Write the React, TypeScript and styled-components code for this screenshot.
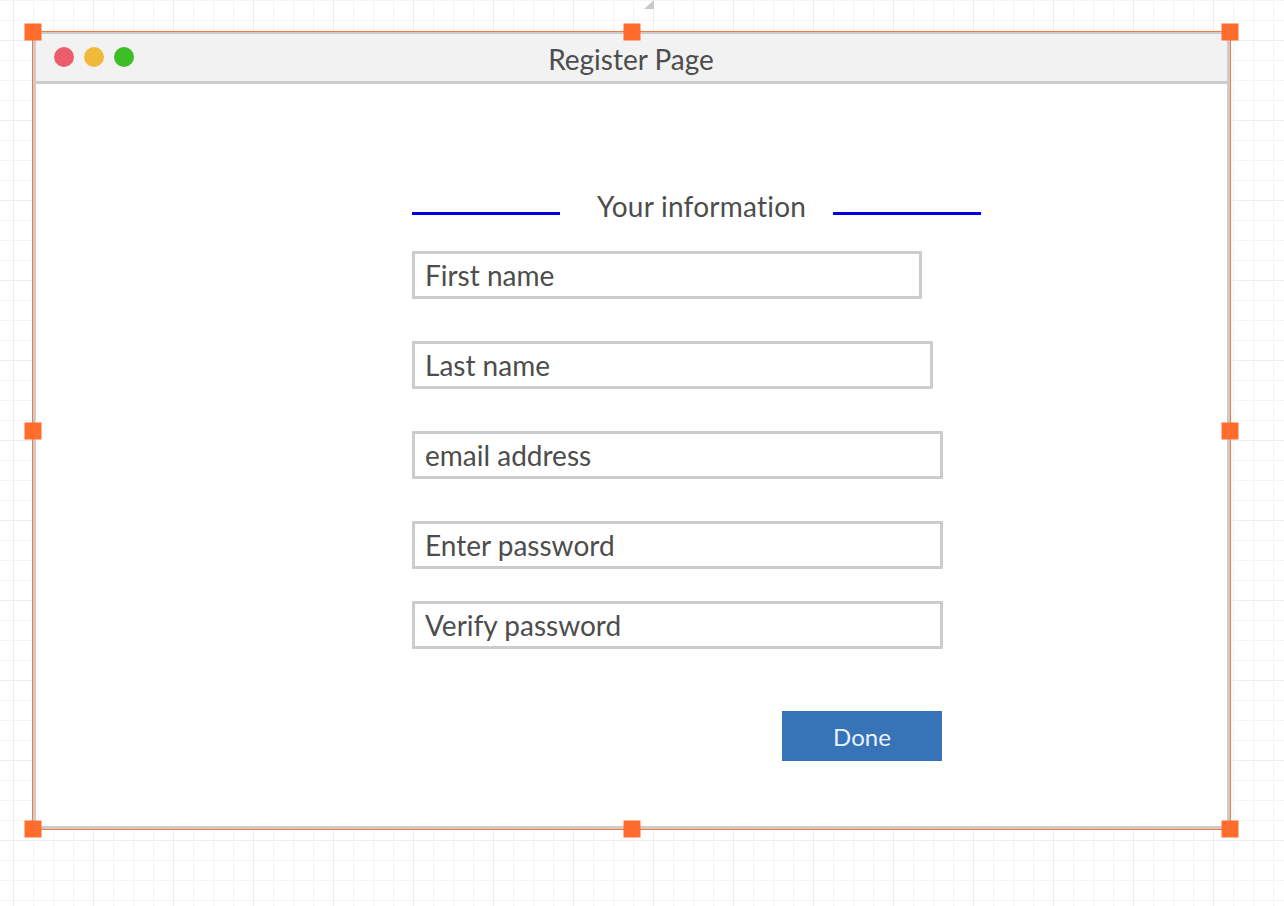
import React from "react";
import styled, { createGlobalStyle } from "styled-components";

const Global = createGlobalStyle`
  html, body { margin: 0; padding: 0; }
  body {
    width: 1284px;
    height: 906px;
    overflow: hidden;
    font-family: Lato, "Open Sans", sans-serif;
    background-color: #ffffff;
    background-image:
      linear-gradient(to right, #eeeeee 1px, transparent 1px),
      linear-gradient(to bottom, #eeeeee 1px, transparent 1px),
      linear-gradient(to right, #f4f4f4 1px, transparent 1px),
      linear-gradient(to bottom, #f4f4f4 1px, transparent 1px);
    background-size: 80px 80px, 80px 80px, 20px 20px, 20px 20px;
    background-position: 13px 40px, 13px 40px, 13px 0px, 13px 0px;
  }
`;

const Canvas = styled.div`
  position: relative;
  width: 1284px;
  height: 906px;
  padding: 31px 0 0 32px;
  box-sizing: border-box;
`;

const RotateMark = styled.div`
  position: absolute;
  left: 644px;
  top: 0;
  width: 0;
  height: 0;
  border-left: 10px solid transparent;
  border-bottom: 9px solid #c9c9c9;
`;

const Selection = styled.div`
  position: relative;
  width: 1199px;
  height: 799px;
  box-sizing: border-box;
  border: 1px solid #f47a42;
`;

const Window = styled.div`
  width: 100%;
  height: 100%;
  box-sizing: border-box;
  border: 3px solid #cccccc;
  border-top-width: 2px;
  background: #ffffff;
  display: flex;
  flex-direction: column;
`;

const TitleBar = styled.div`
  position: relative;
  height: 47px;
  flex: none;
  background: #f2f2f2;
  border-bottom: 3px solid #cccccc;
  display: flex;
  align-items: center;
  justify-content: center;
`;

const Lights = styled.div`
  position: absolute;
  left: 18px;
  top: 13px;
  display: flex;
  gap: 10px;
`;

const Light = styled.span<{ $c: string }>`
  width: 20px;
  height: 20px;
  border-radius: 50%;
  background: ${(p) => p.$c};
`;

const Title = styled.div`
  font-size: 28px;
  color: #4d4d4d;
  margin-left: -1px;
  margin-top: 2px;
`;

const Body = styled.div`
  flex: 1;
  padding: 102px 0 0 376px;
  display: flex;
  flex-direction: column;
`;

const Form = styled.div`
  width: 580px;
  display: flex;
  flex-direction: column;
`;

const Heading = styled.div`
  display: flex;
  align-items: center;
  height: 40px;
`;

const Rule = styled.div<{ $gap: number }>`
  width: 148px;
  height: 3px;
  background: #0000e0;
  margin-top: 15px;
  margin-left: ${(p) => p.$gap}px;
  flex: none;
`;

const HeadingText = styled.div`
  font-size: 28px;
  color: #4d4d4d;
  margin-left: 37px;
  letter-spacing: 0.25px;
  white-space: nowrap;
`;

const Spacer = styled.div`
  height: 25px;
`;

const Field = styled.input<{ $w: number; $mt: number }>`
  display: block;
  box-sizing: border-box;
  width: ${(p) => p.$w}px;
  height: 48px;
  margin: ${(p) => p.$mt}px 0 0 0;
  padding: 0 0 0 10px;
  border: 3px solid #cccccc;
  border-radius: 1px;
  background: #ffffff;
  font-family: Lato, "Open Sans", sans-serif;
  font-size: 28px;
  color: #4d4d4d;
  outline: none;
  &::placeholder { color: #4d4d4d; opacity: 1; }
`;

const Actions = styled.div`
  width: 530px;
  display: flex;
  justify-content: flex-end;
  margin-top: 62px;
`;

const DoneButton = styled.button`
  width: 160px;
  height: 50px;
  border: none;
  background: #3673b7;
  color: #e9f1ff;
  font-family: Lato, "Open Sans", sans-serif;
  font-size: 24px;
  padding: 0;
  cursor: pointer;
`;

const Handle = styled.div<{ $x: string; $y: string }>`
  position: absolute;
  width: 17px;
  height: 17px;
  background: #ff6c2c;
  left: ${(p) => p.$x};
  top: ${(p) => p.$y};
  transform: translate(-50%, -50%);
`;

const fields = [
  { label: "First name", w: 510, mt: 0 },
  { label: "Last name", w: 521, mt: 42 },
  { label: "email address", w: 531, mt: 42 },
  { label: "Enter password", w: 531, mt: 42 },
  { label: "Verify password", w: 531, mt: 32 },
];

const handles: [string, string][] = [
  ["0px", "0px"],
  ["50%", "0px"],
  ["100%", "0px"],
  ["0px", "50%"],
  ["100%", "50%"],
  ["0px", "100%"],
  ["50%", "100%"],
  ["100%", "100%"],
];

export default function App() {
  return (
    <>
      <Global />
      <Canvas>
        <RotateMark />
        <Selection>
          <Window>
            <TitleBar>
              <Lights>
                <Light $c="#ec5d6c" />
                <Light $c="#f0b93a" />
                <Light $c="#3dbd26" />
              </Lights>
              <Title>Register Page</Title>
            </TitleBar>
            <Body>
              <Form>
                <Heading>
                  <Rule $gap={0} />
                  <HeadingText>Your information</HeadingText>
                  <Rule $gap={27} />
                </Heading>
                <Spacer />
                {fields.map((f) => (
                  <Field key={f.label} placeholder={f.label} $w={f.w} $mt={f.mt} readOnly />
                ))}
                <Actions>
                  <DoneButton>Done</DoneButton>
                </Actions>
              </Form>
            </Body>
          </Window>
          {handles.map(([x, y], i) => (
            <Handle key={i} $x={x} $y={y} />
          ))}
        </Selection>
      </Canvas>
    </>
  );
}
